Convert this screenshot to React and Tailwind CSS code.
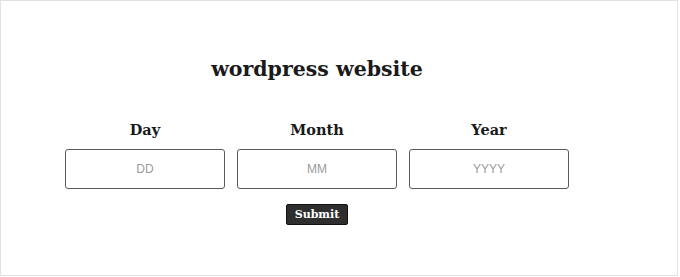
export default function App() {
  const fields = [
    { label: 'Day', placeholder: 'DD' },
    { label: 'Month', placeholder: 'MM' },
    { label: 'Year', placeholder: 'YYYY' },
  ]

  return (
    <div className="h-[277px] w-[680px] bg-white">
      <div className="h-[276px] w-[678px] border border-[#e2e2e2] pl-[64px] pt-[54px]">
        <div className="flex w-[504px] flex-col items-center">
          <h1 className="text-[20.5px] font-bold leading-7 text-[#1a1a1a] [font-family:'DejaVu_Serif',serif]">
            wordpress website
          </h1>
          <div className="mt-[37px] flex gap-3">
            {fields.map((f) => (
              <div key={f.label} className="flex flex-col items-center">
                <label className="text-[14.5px] font-bold leading-5 text-[#1a1a1a] [font-family:'DejaVu_Serif',serif]">
                  {f.label}
                </label>
                <input
                  placeholder={f.placeholder}
                  className="mt-[9px] h-[40px] w-[160px] rounded-[3px] border border-[#5a5a5a] text-center text-[12px] placeholder:text-[#9a9a9a] [font-family:'Liberation_Sans',sans-serif]"
                />
              </div>
            ))}
          </div>
          <button className="mt-[15px] h-[21px] rounded-[2px] border border-[#111] bg-[#2e2e2e] px-[8px] text-[11px] font-bold leading-none text-white [font-family:'DejaVu_Serif',serif]">
            Submit
          </button>
        </div>
      </div>
    </div>
  )
}
